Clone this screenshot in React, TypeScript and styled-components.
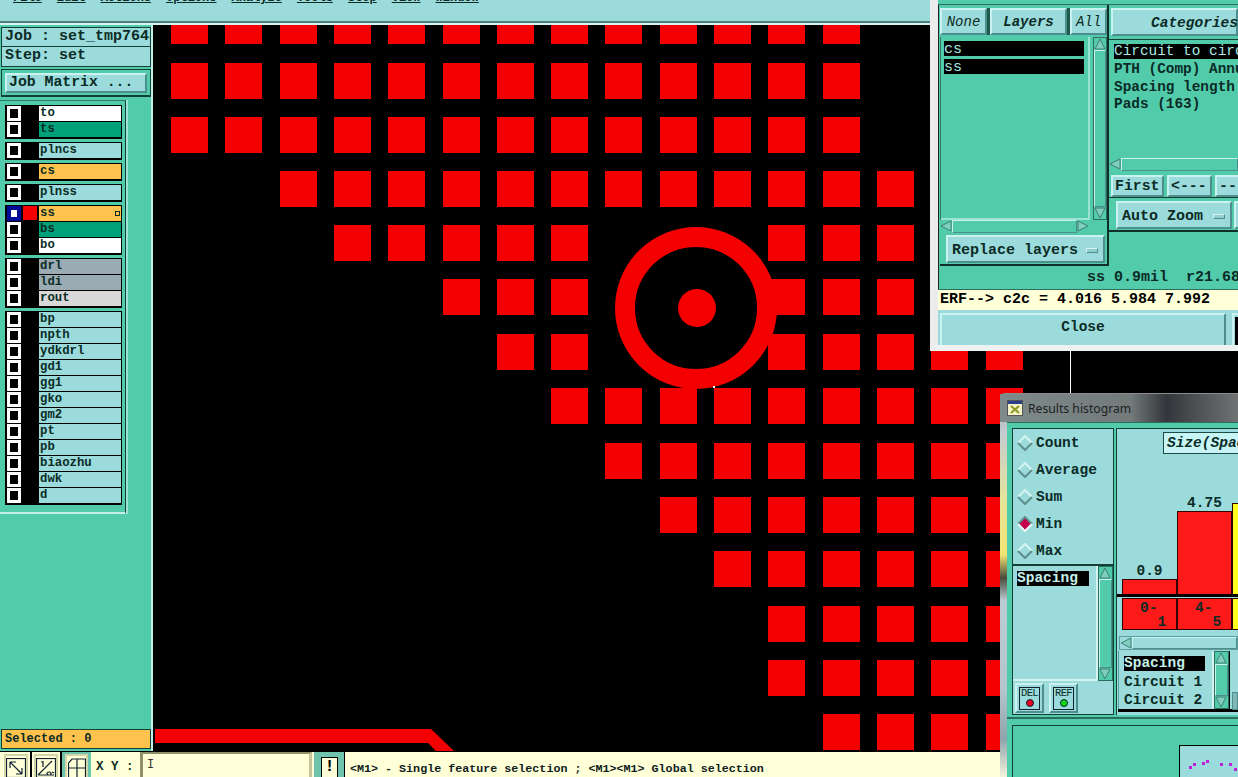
import * as React from "react";
import styled, { createGlobalStyle, css } from "styled-components";

const PANEL = "#9bdbdb";
const TEAL = "#52cbab";
const DARK = "#123f36";
const INK = "#0b2b26";
const CREAM = "#ffffd8";

const raised = css`
  border-style: solid;
  border-width: 2px;
  border-color: #c9f2f0 #4c8f8c #4c8f8c #c9f2f0;
`;

const GlobalStyle = createGlobalStyle`
  html, body { margin: 0; padding: 0; background: #000; }
  * { box-sizing: border-box; }
  body { font: bold 12px "Liberation Mono", monospace; color: ${INK}; }
`;

const Page = styled.div`
  position: relative;
  width: 1238px;
  height: 777px;
  overflow: hidden;
  display: flex;
  flex-direction: column;
  background: #000;
`;

const MenuBar = styled.div`
  flex: 0 0 25px;
  background: ${PANEL};
  border-bottom: 2px solid #d9f4f2;
  box-shadow: inset 0 -2px 0 #4c7f7c;
  display: flex;
  overflow: hidden;
  padding-left: 13px;
  gap: 15px;
`;

const MenuItem = styled.span`
  margin-top: -8px;
  line-height: 12px;
  height: 14px;
  text-decoration: underline;
  font-size: 12px;
`;

const Middle = styled.div`
  flex: 1;
  display: flex;
  min-height: 0;
`;

const LeftPanel = styled.div`
  flex: 0 0 153px;
  background: ${TEAL};
  border-right: 2px solid #c4efe6;
  display: flex;
  flex-direction: column;
  padding: 2px 0 2px 1px;
`;

const JobBox = styled.div`
  width: 150px;
  border: 1px solid ${DARK};
  background: ${PANEL};
`;

const JobLine = styled.div<{ $last?: boolean }>`
  height: 19px;
  line-height: 18px;
  padding-left: 3px;
  font-size: 15px;
  white-space: nowrap;
  overflow: hidden;
  ${(p) => !p.$last && `border-bottom: 1px solid ${DARK};`}
`;

const JobButtonWrap = styled.div`
  width: 150px;
  height: 28px;
  margin-top: 2px;
  border: 1px solid ${DARK};
  padding: 3px;
  border-bottom-width: 2px;
`;

const JobButton = styled.div`
  ${raised}
  height: 20px;
  background: ${PANEL};
  font-size: 14.8px;
  line-height: 14px;
  padding-left: 2px;
  white-space: nowrap;
`;

const LayerArea = styled.div`
  display: flex;
  margin-top: 3px;
  height: 414px;
  margin-left: -1px;
`;

const LayerList = styled.div`
  width: 126px;
  padding: 4px 2px 0 5px;
  border-right: 1px solid ${DARK};
  border-top: 1px solid #2d7f6b;
  border-bottom: 2px solid #c4efe6;
  display: flex;
  flex-direction: column;
  gap: 3px;
`;

const LayerScroll = styled.div`
  flex: 1;
  border-left: 2px solid #9be3d2;
  background: ${TEAL};
`;

const LayerGroup = styled.div`
  background: #000;
  padding: 1px 1px 1px 2px;
  width: 117px;
  display: flex;
  flex-direction: column;
`;

const LayerRow = styled.div`
  display: flex;
  height: 16px;
  align-items: stretch;
`;

const CheckCell = styled.div<{ $on?: boolean }>`
  flex: 0 0 14px;
  width: 14px;
  height: 15px;
  border: 3px solid #fff;
  background: #000;
  ${(p) => p.$on && `border: 4px solid #000a96; background: #fff;`}
`;

const Swatch = styled.div<{ $color: string }>`
  width: 14px;
  height: 14px;
  margin: 0 2px;
  flex: 0 0 14px;
  background: ${(p) => p.$color};
`;

const LayerName = styled.div<{ $bg: string }>`
  flex: 1;
  height: 15px;
  position: relative;
  background: ${(p) => p.$bg};
  line-height: 15px;
  padding-left: 1px;
  font-size: 12.3px;
`;

const SubMark = styled.span`
  position: absolute;
  right: 1px;
  top: 5px;
  width: 5px;
  height: 5px;
  border: 1px solid ${INK};
`;

const SelectedBar = styled.div`
  margin-top: auto;
  width: 150px;
  height: 20px;
  background: #ffc34d;
  border: 1px solid ${DARK};
  line-height: 18px;
  padding-left: 3px;
`;

const Board = styled.div`
  flex: 1;
  position: relative;
  background: #000;
  overflow: hidden;
`;

const Artwork = styled.svg`
  display: block;
  width: 100%;
  height: 100%;
`;

const StatusBar = styled.div`
  flex: 0 0 25px;
  margin-top: 1px;
  background: ${CREAM};
  display: flex;
  align-items: stretch;
  overflow: hidden;
`;

const ToolGroup = styled.div`
  display: flex;
  padding-left: 2px;
`;

const ToolBtn = styled.div<{ $active?: boolean; $last?: boolean }>`
  width: ${(p) => (p.$last ? 29 : 30)}px;
  background: ${(p) => (p.$active ? "#6fc4ae" : CREAM)};
  ${(p) => !p.$last && !p.$active && "border-right: 2px solid #000;"}
  padding: ${(p) => (p.$active ? "2px 3px 0 3px" : "2px 2px 0 2px")};
`;

const ToolFace = styled.div`
  height: 100%;
  background: ${CREAM};
  border-style: solid;
  border-width: 2px 2px 0 2px;
  border-color: #d3d5a8;
  display: flex;
  justify-content: center;
  padding-top: 2px;
  overflow: hidden;
`;

const XYLabel = styled.div`
  flex: 0 0 49px;
  padding: 8px 0 0 5px;
  font-size: 12.5px;
  white-space: nowrap;
`;

const XYInput = styled.div`
  flex: 0 0 172px;
  border-style: solid;
  border-width: 2px 3px 0 3px;
  border-color: #8f9169 #c5c69c #c5c69c #8f9169;
  background: ${CREAM};
  padding-left: 4px;
  color: #333;
  font-weight: normal;
  line-height: 22px;
`;

const BangBtn = styled.div`
  flex: 0 0 31px;
  background: #6fc4ae;
  margin: 0 1px 0 2px;
  padding: 5px 6px 0 7px;
  border-right: 1px solid #000;
`;

const BangFace = styled.div`
  background: ${CREAM};
  border: 1px solid #000;
  border-bottom: none;
  height: 22px;
  text-align: center;
  font-size: 16px;
  line-height: 18px;
  color: #000;
`;

const StatusText = styled.div`
  padding: 10px 0 0 4px;
  font-size: 11.7px;
  color: #10201c;
  white-space: nowrap;
`;

/* layers window, top right */
const LayersWindow = styled.div`
  position: absolute;
  left: 930px;
  top: 0;
  width: 308px;
  height: 351px;
  background: ${TEAL};
  border-left: 8px solid #ececec;
  border-bottom: 6px solid #eef2f0;
  box-shadow: inset 1px 0 0 #222;
  display: flex;
  flex-direction: column;
  overflow: hidden;
`;

const TopStrip = styled.div`
  flex: 0 0 5px;
  border-bottom: 1px solid #2d6d5f;
  background: ${TEAL};
`;

const WindowColumns = styled.div`
  display: flex;
  flex: 0 0 261px;
`;

const LayersCol = styled.div`
  flex: 0 0 171px;
  border-right: 2px solid #0f2f28;
  padding: 3px 0 0 2px;
  display: flex;
  flex-direction: column;
`;

const TabRow = styled.div`
  display: flex;
  gap: 3px;
  flex: 0 0 27px;
  background: #1e5b4e;
`;

const Tab = styled.div<{ $w: number; $title?: boolean }>`
  ${raised}
  width: ${(p) => p.$w}px;
  background: ${PANEL};
  font-style: italic;
  font-weight: ${(p) => (p.$title ? "bold" : "normal")};
  font-size: 14px;
  padding-top: 1px;
  line-height: 22px;
  text-align: center;
  color: ${INK};
`;

const ListRow = styled.div`
  display: flex;
  flex: 0 0 183px;
  margin-top: 2px;
  border-left: 1px solid #2d7f6b;
`;

const LayerListBox = styled.div`
  flex: 1;
  padding: 4px 0 0 3px;
  border-right: 2px solid #9be3d2;
  border-bottom: 2px solid #9be3d2;
  display: flex;
  flex-direction: column;
  gap: 3px;
`;

const PickedLayer = styled.div`
  width: 140px;
  height: 15px;
  background: #000;
  color: #a8e8e0;
  line-height: 17px;
  font-weight: normal;
  font-size: 15px;
  overflow: hidden;
`;

const VScroll = styled.div<{ $w?: number; $gap?: number }>`
  flex: 0 0 ${(p) => p.$w ?? 13}px;
  margin-left: ${(p) => p.$gap ?? 0}px;
  display: flex;
  flex-direction: column;
  background: ${TEAL};
  border: 1px solid #2d6d5f;
`;

const VThumb = styled.div`
  flex: 1;
  ${raised}
  border-width: 1px;
  background: ${TEAL};
`;

const HScroll = styled.div<{ $bg?: string; $right?: number }>`
  flex: 0 0 13px;
  margin-right: ${(p) => p.$right ?? 0}px;
  display: flex;
  background: ${(p) => p.$bg ?? TEAL};
`;

const HThumb = styled.div<{ $bg?: string }>`
  flex: 1;
  ${raised}
  border-width: 1px;
  background: ${(p) => p.$bg ?? TEAL};
`;

const ReplaceWrap = styled.div`
  flex: 1;
  padding: 2px 2px 1px 6px;
  border-bottom: 2px solid #0f2f28;
`;

const OptionBtn = styled.div<{ $w?: number }>`
  ${raised}
  ${(p) => p.$w && `flex: 0 0 ${p.$w}px;`}
  height: 100%;
  background: ${PANEL};
  font-size: 15px;
  display: flex;
  align-items: center;
  justify-content: space-between;
  padding: 2px 5px 0 4px;
  white-space: nowrap;
`;

const OptionMark = styled.span`
  width: 12px;
  height: 5px;
  background: #8fcfcf;
  border: 1px solid;
  border-color: #d8f4f2 #4c8f8c #4c8f8c #d8f4f2;
`;

const CatCol = styled.div`
  flex: 1;
  min-width: 0;
  display: flex;
  flex-direction: column;
  padding-top: 3px;
`;

const CatTitle = styled.div`
  ${raised}
  flex: 0 0 28px;
  margin-left: 2px;
  background: ${PANEL};
  font-style: italic;
  font-size: 14.5px;
  padding: 2px 0 0 38px;
  line-height: 22px;
  white-space: nowrap;
`;

const CatList = styled.div`
  flex: 0 0 119px;
  margin-top: 3px;
  padding: 4px 0 0 5px;
  border-top: 1px solid ${DARK};
  font-size: 14.4px;
  line-height: 17.5px;
  white-space: nowrap;
  overflow: hidden;
`;

const CatPicked = styled.div`
  background: #000;
  color: #a8e8e0;
  height: 15px;
  line-height: 15px;
  margin-bottom: 2px;
  font-weight: normal;
`;

const NavRow = styled.div`
  display: flex;
  gap: 3px;
  flex: 0 0 25px;
  margin-top: 2px;
  padding: 2px 0 0 2px;
  border-bottom: 1px solid ${DARK};
`;

const NavBtn = styled.div<{ $w: number }>`
  ${raised}
  flex: 0 0 ${(p) => p.$w}px;
  background: ${PANEL};
  font-size: 14.8px;
  line-height: 18px;
  padding-left: 2px;
  white-space: nowrap;
`;

const ZoomRow = styled.div`
  display: flex;
  flex: 0 0 34px;
  padding: 3px 0 1px 7px;
  gap: 2px;
  border-bottom: 2px solid #0f2f28;
`;

const InfoLine = styled.div`
  flex: 0 0 21px;
  padding-left: 149px;
  font-size: 15px;
  line-height: 23px;
  white-space: pre;
`;

const ErfLine = styled.div`
  flex: 0 0 21px;
  background: ${CREAM};
  border-top: 1px solid #2d6d5f;
  font-size: 15px;
  line-height: 19px;
  padding-left: 2px;
  color: #000;
  white-space: nowrap;
`;

const CloseRow = styled.div`
  flex: 1;
  background: ${PANEL};
  display: flex;
  gap: 6px;
  padding: 3px 0 3px 2px;
  box-shadow: inset 0 -1px 0 #4c8f8c;
`;

const CloseBtn = styled.div`
  ${raised}
  flex: 0 0 286px;
  text-align: center;
  font-size: 14.5px;
  line-height: 24px;
  background: ${PANEL};
`;

const SideBtn = styled.div`
  ${raised}
  flex: 1;
  padding: 2px 0 0 1px;
  background: ${PANEL};
  &::after {
    content: "";
    display: block;
    height: 20px;
    border: 2px solid #000;
    border-bottom-width: 8px;
  }
`;

/* histogram window, bottom right */
const HistWindow = styled.div`
  position: absolute;
  left: 1000px;
  top: 393px;
  width: 238px;
  height: 384px;
  display: flex;
  flex-direction: column;
  background: linear-gradient(
    180deg,
    #9aa4a8 0%,
    #c4ccd0 10%,
    #e6e49a 28%,
    #f2e472 42%,
    #4a4a3c 48%,
    #bcccd4 54%,
    #b2c4cc 78%,
    #8ea4ac 90%,
    #f4f4dc 100%
  );
  border-top: 1px solid #8d8d8d;
  border-radius: 5px 0 0 0;
  padding-left: 7px;
`;

const HistTitle = styled.div`
  flex: 0 0 28px;
  margin-left: -7px;
  padding-left: 7px;
  display: flex;
  align-items: center;
  gap: 5px;
  background: linear-gradient(90deg, #7f8a8a 0%, #727a7a 55%, #33363a 70%, #4c5052 82%, #707274 100%);
  font: 12.2px "Noto Sans", "Liberation Sans", Arial, sans-serif;
  color: #1b1f1f;
`;

const HistBody = styled.div`
  flex: 1;
  min-height: 0;
  background: ${TEAL};
  display: flex;
  flex-direction: column;
`;

const HistTop = styled.div`
  display: flex;
  flex: 0 0 294px;
  padding: 5px 0 0 5px;
  gap: 2px;
  background: ${TEAL};
  border-top: 1px solid #2d6d5f;
`;

const StatsCol = styled.div`
  flex: 0 0 102px;
  background: ${PANEL};
  border: 1px solid ${DARK};
  display: flex;
  flex-direction: column;
  height: 287px;
`;

const RadioBox = styled.div`
  flex: 0 0 137px;
  border-bottom: 2px solid ${DARK};
  padding: 0 0 0 4px;
  display: flex;
  flex-direction: column;
`;

const RadioRow = styled.div`
  flex: 0 0 27px;
  display: flex;
  align-items: center;
  gap: 3px;
  font-size: 14.5px;
`;

const SpacingPane = styled.div`
  display: flex;
  flex: 0 0 115px;
`;

const SpacingList = styled.div`
  flex: 1;
  padding: 5px 0 0 4px;
  border-right: 2px solid #d3f3f1;
  border-bottom: 2px solid #d3f3f1;
`;

const BlackPick = styled.div<{ $w: number }>`
  width: ${(p) => p.$w}px;
  height: 15px;
  background: #000;
  color: #c6efea;
  line-height: 15px;
  font-size: 14.5px;
`;

const MarkRow = styled.div`
  flex: 1;
  display: flex;
  gap: 5px;
  padding: 2px 0 0 2px;
`;

const MarkBtn = styled.div`
  ${raised}
  width: 29px;
  height: 30px;
  padding: 2px;
`;

const MarkFace = styled.div`
  border: 1px solid #123;
  height: 23px;
  font-weight: normal;
  font-size: 10.5px;
  line-height: 11px;
  text-align: center;
  letter-spacing: -0.6px;
`;

const Lamp = styled.div<{ $c: string }>`
  width: 8px;
  height: 8px;
  margin: 0 auto;
  border-radius: 50%;
  background: ${(p) => p.$c};
  border: 1px solid #123;
`;

const ChartCol = styled.div`
  flex: 1;
  min-width: 0;
  background: ${PANEL};
  border-left: 1px solid ${DARK};
  border-top: 1px solid ${DARK};
  height: 287px;
  display: flex;
  flex-direction: column;
`;

const ChartHead = styled.div`
  flex: 0 0 22px;
  margin: 3px 0 0 46px;
  background: #c7f5f5;
  border: 1px solid #1c4a44;
  border-right: none;
  font-style: italic;
  font-size: 14.5px;
  line-height: 20px;
  padding-left: 3px;
  white-space: nowrap;
  overflow: hidden;
`;

const Bars = styled.div`
  flex: 0 0 143px;
  padding-left: 5px;
  display: flex;
  align-items: flex-end;
  border-bottom: 3px solid #000;
`;

const BarCol = styled.div<{ $w: number }>`
  flex: 0 0 ${(p) => p.$w}px;
  display: flex;
  flex-direction: column;
  align-items: center;
  font-size: 14.5px;
  line-height: 15px;
`;

const BarFill = styled.div<{ $h: number; $c: string }>`
  align-self: stretch;
  height: ${(p) => p.$h}px;
  background: ${(p) => p.$c};
  border: 1px solid #300;
  border-bottom: none;
`;

const Bins = styled.div`
  display: flex;
  flex: 0 0 28px;
  margin-top: 1px;
  padding-left: 5px;
`;

const Bin = styled.div<{ $w: number; $c: string }>`
  flex: 0 0 ${(p) => p.$w}px;
  background: ${(p) => p.$c};
  border: 1px solid #300;
  font-size: 14.5px;
  line-height: 14px;
  padding: 2px 0 0 17px;
  overflow: hidden;
  white-space: pre;
`;

const ChartGap = styled.div`
  flex: 0 0 6px;
`;

const ChartScroll = styled(HScroll)`
  flex: 0 0 14px;
  margin-left: 2px;
  border: 1px solid #5c9f9c;
`;

const SeriesRow = styled.div`
  display: flex;
  flex: 1;
  min-height: 0;
  margin: 1px 0 3px 1px;
  border-bottom: 3px solid #000;
`;

const SeriesList = styled.div`
  flex: 0 0 96px;
  padding: 5px 0 0 5px;
  border-left: 1px solid #5c9f9c;
  border-right: 2px solid #d3f3f1;
  font-size: 14.5px;
  line-height: 17.5px;
  white-space: nowrap;
`;

const SeriesPick = styled(BlackPick)`
  width: 81px;
  margin-bottom: 3px;
`;

const SeriesRest = styled.div`
  flex: 1;
  border-left: 1px solid #000;
  padding-top: 41px;
  &::after {
    content: "";
    display: block;
    height: 16px;
    margin-left: 2px;
    background: #7fb8b6;
    border: 1px solid #4c8f8c;
  }
`;

const HistBottom = styled.div`
  flex: 1;
  min-height: 0;
  margin-top: 1px;
  padding: 6px 0 0 5px;
  border-top: 2px solid #2d6d5f;
  display: flex;
`;

const Preview = styled.div`
  flex: 1;
  border: 1px solid ${DARK};
  border-right: none;
  border-bottom: none;
  padding: 19px 0 0 166px;
  background: ${TEAL};
`;

const PreviewFrame = styled.div`
  height: 100%;
  background: ${PANEL};
  border: 1px solid #000;
  border-right: none;
  border-bottom: none;
  overflow: hidden;
`;

/* data */
const PAD_X = [171, 225, 280, 334, 388, 443, 497, 551, 605, 660, 714, 768, 823, 877, 931, 986];
const PAD_Y = [8, 63, 117, 171, 225, 279, 334, 388, 443, 497, 551, 606, 660, 714];
// column indexes filled on each row, as [from, to] runs
const PAD_RUNS: [number, number][][] = [
  [[0, 12]],
  [[0, 12]],
  [[0, 12]],
  [[2, 13]],
  [[3, 7], [11, 13]],
  [[5, 7], [11, 13]],
  [[6, 7], [11, 15]],
  [[7, 15]],
  [[8, 15]],
  [[9, 15]],
  [[10, 15]],
  [[11, 15]],
  [[11, 15]],
  [[12, 15]],
];

type Layer = { name: string; bg: string; active?: boolean };

const WHITE = "#fff";
const GREEN = "#00a078";
const ORANGE = "#ffc34d";
const GRAY = "#9aabb3";

const LAYER_GROUPS: Layer[][] = [
  [{ name: "to", bg: WHITE }, { name: "ts", bg: GREEN }],
  [{ name: "plncs", bg: PANEL }],
  [{ name: "cs", bg: ORANGE }],
  [{ name: "plnss", bg: PANEL }],
  [{ name: "ss", bg: ORANGE, active: true }, { name: "bs", bg: GREEN }, { name: "bo", bg: WHITE }],
  [{ name: "drl", bg: GRAY }, { name: "ldi", bg: GRAY }, { name: "rout", bg: "#d8d8d8" }],
  ["bp", "npth", "ydkdrl", "gd1", "gg1", "gko", "gm2", "pt", "pb", "biaozhu", "dwk", "d"].map((name) => ({
    name,
    bg: PANEL,
  })),
];

const MENU = ["File", "Edit", "Actions", "Options", "Analyze", "Tools", "Step", "View", "Window"];

const Arrow = ({ dir }: { dir: "up" | "down" | "left" | "right" }) => {
  const pts = {
    up: "6,1 11,11 1,11",
    down: "1,1 11,1 6,11",
    left: "1,6 11,1 11,11",
    right: "1,1 11,6 1,11",
  }[dir];
  return (
    <svg width="12" height="12" viewBox="0 0 12 12" style={{ flex: "0 0 12px" }}>
      <polygon points={pts} fill="#7ecfbf" stroke="#3f7f72" strokeWidth="1" />
    </svg>
  );
};

const Diamond = ({ on }: { on?: boolean }) => (
  <svg width="16" height="16" viewBox="0 0 16 16">
    <polygon points="8,1 15,8 8,15 1,8" fill={on ? "#c4004c" : PANEL} />
    <polyline points="1,8 8,1 15,8" fill="none" stroke={on ? "#5f8f8c" : "#d6f4f2"} strokeWidth="2" />
    <polyline points="1,8 8,15 15,8" fill="none" stroke={on ? "#eafafa" : "#5f8f8c"} strokeWidth="2" />
  </svg>
);

const PadArtwork = () => (
  <Artwork viewBox="153 25 1085 726" preserveAspectRatio="xMinYMin slice">
    {PAD_Y.map((y, row) =>
      PAD_RUNS[row].flatMap(([from, to]) =>
        PAD_X.slice(from, to + 1).map((x) => (
          <rect key={`${x}-${y}`} x={x} y={y} width="37" height="36" fill="#f50000" />
        ))
      )
    )}
    <circle cx="696" cy="308" r="71" fill="#000" stroke="#f50000" strokeWidth="20" />
    <circle cx="697" cy="308" r="19" fill="#f50000" />
    <polygon points="155,729 431,729 454,751 436,751 428,743 155,743" fill="#f50000" />
    <line x1="1070.5" y1="345" x2="1070.5" y2="395" stroke="#fff" strokeWidth="1" />
    <rect x="713" y="386" width="2" height="2" fill="#fff" />
  </Artwork>
);

const FitIcon = () => (
  <svg width="20" height="20" viewBox="0 0 20 20" fill="none" stroke="#123" strokeWidth="1.2" style={{ flex: "none" }}>
    <rect x="0.5" y="0.5" width="19" height="19" />
    <path d="M4 4 L16 16 M4 4 H10 M4 4 V10 M16 16 H10 M16 16 V10" />
  </svg>
);

const AngleIcon = () => (
  <svg width="20" height="20" viewBox="0 0 20 20" fill="none" stroke="#123" strokeWidth="1.2" style={{ flex: "none" }}>
    <rect x="0.5" y="0.5" width="19" height="19" />
    <path d="M2 17 L16 3 M2 17 H18 M7 3 V9 M5 4 H7 M13 14 a2 1.5 0 1 0 0.1 0 M16 14 l2 1" />
  </svg>
);

const GridIcon = () => (
  <svg width="18" height="20" viewBox="0 0 18 20" fill="none" stroke="#123" strokeWidth="1.2" style={{ flex: "none" }}>
    <path d="M0.5 19.5 V5 L4 1 H17.5 V19.5 Z M9 1 V19.5 M0.5 10 H17.5" />
  </svg>
);

const PREVIEW_DOTS: [number, number][] = [
  [9, 20], [13, 17], [22, 16], [26, 14], [40, 17], [49, 17], [54, 22],
];

export default function App() {
  return (
    <Page>
      <GlobalStyle />
      <MenuBar>
        {MENU.map((m) => (
          <MenuItem key={m}>{m}</MenuItem>
        ))}
      </MenuBar>
      <Middle>
        <LeftPanel>
          <JobBox>
            <JobLine>Job : set_tmp764816</JobLine>
            <JobLine $last>Step: set</JobLine>
          </JobBox>
          <JobButtonWrap>
            <JobButton>Job Matrix ...</JobButton>
          </JobButtonWrap>
          <LayerArea>
            <LayerList>
              {LAYER_GROUPS.map((group) => (
                <LayerGroup key={group[0].name}>
                  {group.map((l) => (
                    <LayerRow key={l.name}>
                      <CheckCell $on={l.active} />
                      <Swatch $color={l.active ? "#f50000" : "#000"} />
                      <LayerName $bg={l.bg}>
                        {l.name}
                        {l.active && <SubMark />}
                      </LayerName>
                    </LayerRow>
                  ))}
                </LayerGroup>
              ))}
            </LayerList>
            <LayerScroll />
          </LayerArea>
          <SelectedBar>Selected : 0</SelectedBar>
        </LeftPanel>
        <Board>
          <PadArtwork />
        </Board>
      </Middle>
      <StatusBar>
        <ToolGroup>
          <ToolBtn>
            <ToolFace>
              <FitIcon />
            </ToolFace>
          </ToolBtn>
          <ToolBtn>
            <ToolFace>
              <AngleIcon />
            </ToolFace>
          </ToolBtn>
          <ToolBtn $active $last>
            <ToolFace>
              <GridIcon />
            </ToolFace>
          </ToolBtn>
        </ToolGroup>
        <XYLabel>X Y :</XYLabel>
        <XYInput>I</XYInput>
        <BangBtn>
          <BangFace>!</BangFace>
        </BangBtn>
        <StatusText>&lt;M1&gt; - Single feature selection ; &lt;M1&gt;&lt;M1&gt; Global selection</StatusText>
      </StatusBar>

      <LayersWindow>
        <TopStrip />
        <WindowColumns>
          <LayersCol>
            <TabRow>
              <Tab $w={47}>None</Tab>
              <Tab $w={77} $title>Layers</Tab>
              <Tab $w={37}>All</Tab>
            </TabRow>
            <ListRow>
              <LayerListBox>
                <PickedLayer>cs</PickedLayer>
                <PickedLayer>ss</PickedLayer>
              </LayerListBox>
              <VScroll $gap={3}>
                <Arrow dir="up" />
                <VThumb />
                <Arrow dir="down" />
              </VScroll>
            </ListRow>
            <HScroll $right={18}>
              <Arrow dir="left" />
              <HThumb />
              <Arrow dir="right" />
            </HScroll>
            <ReplaceWrap>
              <OptionBtn>
                Replace layers
                <OptionMark />
              </OptionBtn>
            </ReplaceWrap>
          </LayersCol>
          <CatCol>
            <CatTitle>Categories</CatTitle>
            <CatList>
              <CatPicked>Circuit to circuit</CatPicked>
              <div>PTH (Comp) Annular</div>
              <div>Spacing length</div>
              <div>Pads (163)</div>
            </CatList>
            <HScroll>
              <Arrow dir="left" />
              <HThumb />
            </HScroll>
            <NavRow>
              <NavBtn $w={53}>First</NavBtn>
              <NavBtn $w={45}>&lt;---</NavBtn>
              <NavBtn $w={45}>---&gt;</NavBtn>
            </NavRow>
            <ZoomRow>
              <OptionBtn $w={116}>
                Auto Zoom
                <OptionMark />
              </OptionBtn>
              <NavBtn $w={40}>Show</NavBtn>
            </ZoomRow>
          </CatCol>
        </WindowColumns>
        <InfoLine>ss 0.9mil  r21.68</InfoLine>
        <ErfLine>ERF--&gt; c2c = 4.016 5.984 7.992</ErfLine>
        <CloseRow>
          <CloseBtn>Close</CloseBtn>
          <SideBtn />
        </CloseRow>
      </LayersWindow>

      <HistWindow>
        <HistTitle>
          <svg width="16" height="16" viewBox="0 0 16 16">
            <rect x="0.5" y="0.5" width="15" height="15" fill="#f6f2c8" stroke="#555" />
            <rect x="1" y="1" width="14" height="3" fill="#2d3f8c" />
            <path d="M4 6 L12 13 M12 6 L4 13" stroke="#8a9a20" strokeWidth="2" />
          </svg>
          Results histogram
        </HistTitle>
        <HistBody>
          <HistTop>
            <StatsCol>
              <RadioBox>
                {["Count", "Average", "Sum", "Min", "Max"].map((r) => (
                  <RadioRow key={r}>
                    <Diamond on={r === "Min"} />
                    {r}
                  </RadioRow>
                ))}
              </RadioBox>
              <SpacingPane>
                <SpacingList>
                  <BlackPick $w={72}>Spacing</BlackPick>
                </SpacingList>
                <VScroll $w={15}>
                  <Arrow dir="up" />
                  <VThumb />
                  <Arrow dir="down" />
                </VScroll>
              </SpacingPane>
              <MarkRow>
                <MarkBtn>
                  <MarkFace>
                    DEL
                    <Lamp $c="#e8001c" />
                  </MarkFace>
                </MarkBtn>
                <MarkBtn>
                  <MarkFace>
                    REF
                    <Lamp $c="#12d818" />
                  </MarkFace>
                </MarkBtn>
              </MarkRow>
            </StatsCol>
            <ChartCol>
              <ChartHead>Size(Spacing)</ChartHead>
              <Bars>
                <BarCol $w={55}>
                  0.9
                  <BarFill $h={15} $c="#ff1a1a" />
                </BarCol>
                <BarCol $w={55}>
                  4.75
                  <BarFill $h={83} $c="#ff1a1a" />
                </BarCol>
                <BarCol $w={55}>
                  <BarFill $h={91} $c="#ffff1a" />
                </BarCol>
              </Bars>
              <Bins>
                <Bin $w={55} $c="#ff1a1a">{"0-\n  1"}</Bin>
                <Bin $w={55} $c="#ff1a1a">{"4-\n  5"}</Bin>
                <Bin $w={55} $c="#ffff1a">{" "}</Bin>
              </Bins>
              <ChartGap />
              <ChartScroll $bg={PANEL}>
                <Arrow dir="left" />
                <HThumb $bg={PANEL} />
              </ChartScroll>
              <SeriesRow>
                <SeriesList>
                  <SeriesPick $w={81}>Spacing</SeriesPick>
                  <div>Circuit 1</div>
                  <div>Circuit 2</div>
                </SeriesList>
                <VScroll $w={15}>
                  <Arrow dir="up" />
                  <VThumb />
                  <Arrow dir="down" />
                </VScroll>
                <SeriesRest />
              </SeriesRow>
            </ChartCol>
          </HistTop>
          <HistBottom>
            <Preview>
              <PreviewFrame>
                <svg width="70" height="32" viewBox="0 0 70 32">
                  {PREVIEW_DOTS.map(([x, y]) => (
                    <rect key={`${x}-${y}`} x={x} y={y} width="3" height="3" fill="#c020d8" />
                  ))}
                </svg>
              </PreviewFrame>
            </Preview>
          </HistBottom>
        </HistBody>
      </HistWindow>
    </Page>
  );
}
